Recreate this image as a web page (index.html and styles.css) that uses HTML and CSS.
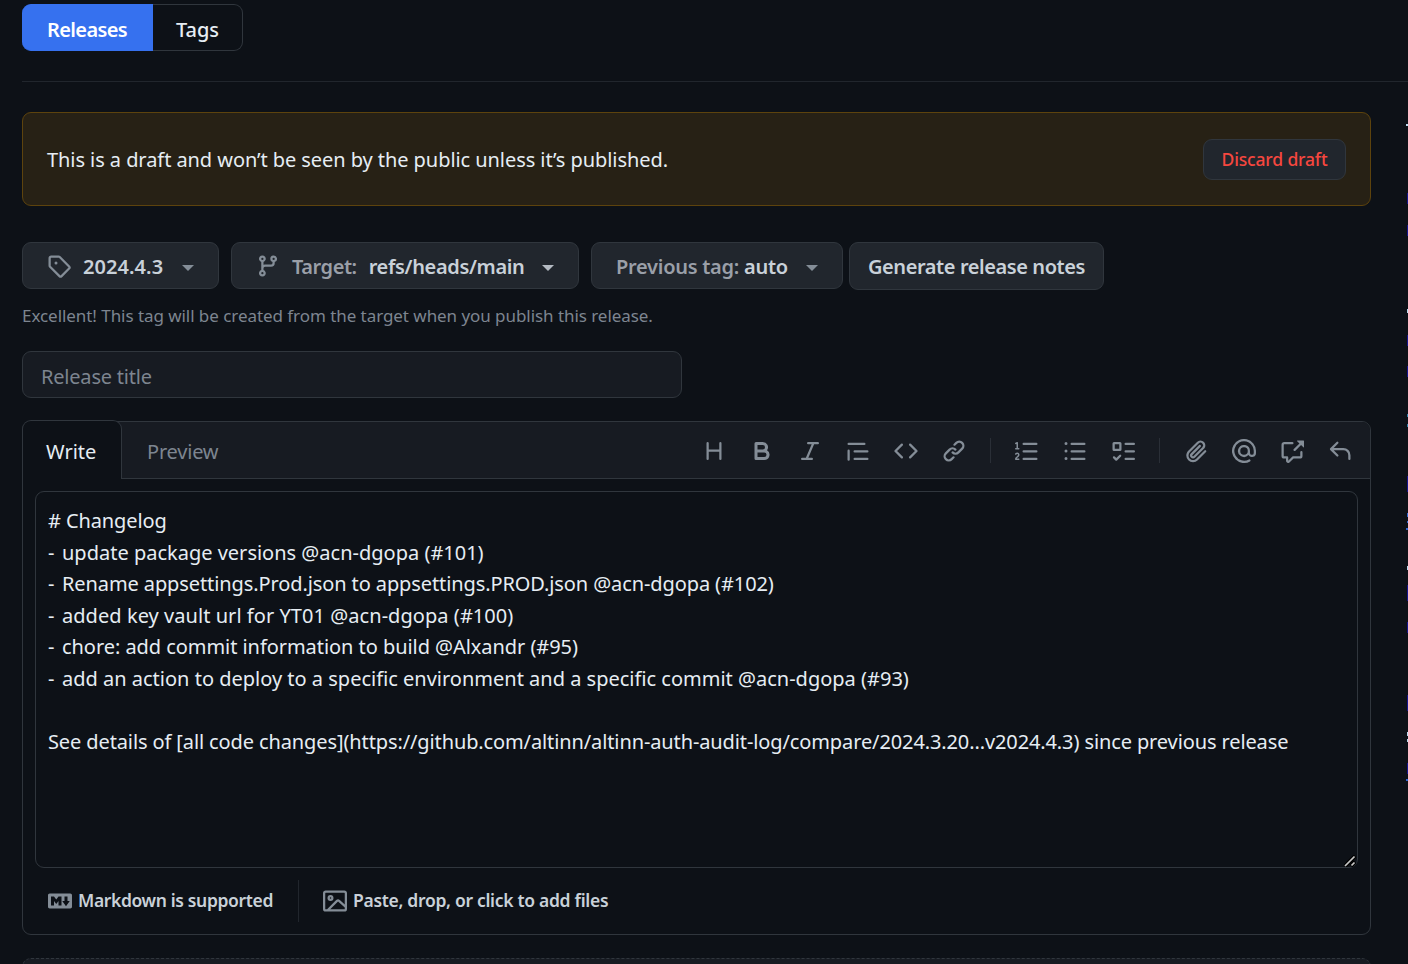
FILE: index.html
```html
<!DOCTYPE html>
<html lang="en">
<head>
<meta charset="utf-8">
<title>Edit release</title>
<link rel="stylesheet" href="styles.css">
</head>
<body>
<div class="page">
<main class="main">
  <nav class="subnav">
    <a class="subnav-item selected"><span class="t-releases">Releases</span></a>
    <a class="subnav-item"><span class="t-tags">Tags</span></a>
  </nav>
  <section class="flash">
    <span class="t-flash">This is a draft and won’t be seen by the public unless it’s published.</span>
    <button class="btn btn-danger"><span class="t-discard">Discard draft</span></button>
  </section>
  <div class="pickers">
    <button class="btn b-tag">
      <svg class="icon" viewBox="0 0 16 16"><path d="M1 7.775V2.75C1 1.784 1.784 1 2.75 1h5.025c.464 0 .91.184 1.238.513l6.25 6.25a1.75 1.75 0 0 1 0 2.474l-5.026 5.026a1.75 1.75 0 0 1-2.474 0l-6.25-6.25A1.752 1.752 0 0 1 1 7.775Zm1.5 0c0 .066.026.13.073.177l6.25 6.25a.25.25 0 0 0 .354 0l5.025-5.025a.25.25 0 0 0 0-.354l-6.25-6.25a.25.25 0 0 0-.177-.073H2.75a.25.25 0 0 0-.25.25ZM6 5a1 1 0 1 1 0 2 1 1 0 0 1 0-2Z"/></svg>
      <span class="value t-version">2024.4.3</span><i class="caret"></i>
    </button>
    <button class="btn b-target">
      <svg class="icon" viewBox="0 0 16 16"><path d="M9.5 3.25a2.25 2.25 0 1 1 3 2.122V6A2.5 2.5 0 0 1 10 8.5H6a1 1 0 0 0-1 1v1.128a2.251 2.251 0 1 1-1.5 0V5.372a2.25 2.25 0 1 1 1.5 0v1.836A2.493 2.493 0 0 1 6 7h4a1 1 0 0 0 1-1v-.628A2.25 2.25 0 0 1 9.5 3.25Zm-6 0a.75.75 0 1 0 1.5 0 .75.75 0 0 0-1.5 0Zm8.25-.75a.75.75 0 1 0 0 1.5.75.75 0 0 0 0-1.5ZM4.25 12a.75.75 0 1 0 0 1.5.75.75 0 0 0 0-1.5Z"/></svg>
      <span class="label t-target">Target:</span><span class="value t-ref">refs/heads/main</span><i class="caret light"></i>
    </button>
    <button class="btn b-prev"><span class="label t-prev">Previous tag:</span><span class="value t-auto">auto</span><i class="caret"></i></button>
    <button class="btn b-generate"><span class="t-generate">Generate release notes</span></button>
  </div>
  <p class="note"><span class="t-note">Excellent! This tag will be created from the target when you publish this release.</span></p>
  <div class="title-input"><span class="t-title">Release title</span></div>
  <section class="editor">
    <header class="editor-head">
      <div class="tab active"><span class="t-write">Write</span></div>
      <div class="tab"><span class="t-preview">Preview</span></div>
      <div class="toolbar">
        <svg class="icon" viewBox="0 0 16 16"><path d="M3.75 2a.75.75 0 0 1 .75.75V7h7V2.75a.75.75 0 0 1 1.5 0v10.5a.75.75 0 0 1-1.5 0V8.5h-7v4.75a.75.75 0 0 1-1.5 0V2.75A.75.75 0 0 1 3.75 2Z"/></svg>
        <svg class="icon" viewBox="0 0 16 16"><path d="M4 2h4.5a3.501 3.501 0 0 1 2.852 5.53A3.499 3.499 0 0 1 9.5 14H4a1 1 0 0 1-1-1V3a1 1 0 0 1 1-1Zm1 7v3h4.5a1.5 1.5 0 0 0 0-3Zm3.5-2a1.5 1.5 0 0 0 0-3H5v3Z"/></svg>
        <svg class="icon" viewBox="0 0 16 16"><path d="M6 2.75A.75.75 0 0 1 6.75 2h6.5a.75.75 0 0 1 0 1.5h-2.505l-3.858 9H9.25a.75.75 0 0 1 0 1.5h-6.5a.75.75 0 0 1 0-1.5h2.505l3.858-9H6.75A.75.75 0 0 1 6 2.75Z"/></svg>
        <svg class="icon" viewBox="0 0 16 16"><path d="M1.75 2.5h10.5a.75.75 0 0 1 0 1.5H1.75a.75.75 0 0 1 0-1.5Zm4 5h8.5a.75.75 0 0 1 0 1.5h-8.5a.75.75 0 0 1 0-1.5Zm0 5h8.5a.75.75 0 0 1 0 1.5h-8.5a.75.75 0 0 1 0-1.5ZM2.5 7.75v6a.75.75 0 0 1-1.5 0v-6a.75.75 0 0 1 1.5 0Z"/></svg>
        <svg class="icon" viewBox="0 0 16 16"><path d="m11.28 3.22 4.25 4.25a.75.75 0 0 1 0 1.06l-4.25 4.25a.749.749 0 0 1-1.275-.326.749.749 0 0 1 .215-.734L13.94 8l-3.72-3.72a.749.749 0 0 1 .326-1.275.749.749 0 0 1 .734.215Zm-6.56 0a.751.751 0 0 1 1.042.018.751.751 0 0 1 .018 1.042L2.06 8l3.72 3.72a.749.749 0 0 1-.326 1.275.749.749 0 0 1-.734-.215L.47 8.53a.75.75 0 0 1 0-1.06Z"/></svg>
        <svg class="icon" viewBox="0 0 16 16"><path d="m7.775 3.275 1.25-1.25a3.5 3.5 0 1 1 4.95 4.95l-2.5 2.5a3.5 3.5 0 0 1-4.95 0 .751.751 0 0 1 .018-1.042.751.751 0 0 1 1.042-.018 1.998 1.998 0 0 0 2.83 0l2.5-2.5a2.002 2.002 0 0 0-2.83-2.83l-1.25 1.25a.751.751 0 0 1-1.042-.018.751.751 0 0 1-.018-1.042Zm-4.69 9.64a1.998 1.998 0 0 0 2.83 0l1.25-1.25a.751.751 0 0 1 1.042.018.751.751 0 0 1 .018 1.042l-1.25 1.25a3.5 3.5 0 1 1-4.95-4.95l2.5-2.5a3.5 3.5 0 0 1 4.95 0 .751.751 0 0 1-.018 1.042.751.751 0 0 1-1.042.018 1.998 1.998 0 0 0-2.83 0l-2.5 2.5a1.998 1.998 0 0 0 0 2.83Z"/></svg>
        <i class="divider"></i>
        <svg class="icon" viewBox="0 0 16 16"><path d="M5 3.25a.75.75 0 0 1 .75-.75h8.5a.75.75 0 0 1 0 1.5h-8.5A.75.75 0 0 1 5 3.25Zm0 5a.75.75 0 0 1 .75-.75h8.5a.75.75 0 0 1 0 1.5h-8.5A.75.75 0 0 1 5 8.25Zm0 5a.75.75 0 0 1 .75-.75h8.5a.75.75 0 0 1 0 1.5h-8.5a.75.75 0 0 1-.75-.75ZM.924 10.32a.5.5 0 0 1-.851-.525l.001-.001.001-.002.002-.004.007-.011c.097-.144.215-.273.348-.384.228-.19.588-.392 1.068-.392.468 0 .858.181 1.126.484.259.294.377.673.377 1.038 0 .987-.686 1.495-1.156 1.845l-.047.035c-.303.225-.522.4-.654.597h1.357a.5.5 0 0 1 0 1H.5a.5.5 0 0 1-.5-.5c0-1.005.692-1.52 1.167-1.875l.035-.025c.531-.396.8-.625.8-1.078a.57.57 0 0 0-.128-.376C1.806 10.068 1.695 10 1.5 10a.658.658 0 0 0-.429.163.835.835 0 0 0-.144.153ZM2.003 2.5V6h.503a.5.5 0 0 1 0 1H.5a.5.5 0 0 1 0-1h.503V3.308l-.28.14a.5.5 0 0 1-.446-.895l1.003-.5a.5.5 0 0 1 .723.447Z"/></svg>
        <svg class="icon" viewBox="0 0 16 16"><path d="M5.75 2.5h8.5a.75.75 0 0 1 0 1.5h-8.5a.75.75 0 0 1 0-1.5Zm0 5h8.5a.75.75 0 0 1 0 1.5h-8.5a.75.75 0 0 1 0-1.5Zm0 5h8.5a.75.75 0 0 1 0 1.5h-8.5a.75.75 0 0 1 0-1.5ZM2 14a1 1 0 1 1 0-2 1 1 0 0 1 0 2Zm1-6a1 1 0 1 1-2 0 1 1 0 0 1 2 0ZM2 4a1 1 0 1 1 0-2 1 1 0 0 1 0 2Z"/></svg>
        <svg class="icon" viewBox="0 0 16 16"><path d="M2 2h4a1 1 0 0 1 1 1v4a1 1 0 0 1-1 1H2a1 1 0 0 1-1-1V3a1 1 0 0 1 1-1Zm4.655 8.595a.75.75 0 0 1 0 1.06L4.03 14.28a.75.75 0 0 1-1.06 0l-1.5-1.5a.749.749 0 0 1 .326-1.275.749.749 0 0 1 .734.215l.97.97 2.095-2.095a.75.75 0 0 1 1.06 0ZM9.75 2.5h5.5a.75.75 0 0 1 0 1.5h-5.5a.75.75 0 0 1 0-1.5Zm0 5h5.5a.75.75 0 0 1 0 1.5h-5.5a.75.75 0 0 1 0-1.5Zm0 5h5.5a.75.75 0 0 1 0 1.5h-5.5a.75.75 0 0 1 0-1.5Zm-7.25-9v3h3v-3Z"/></svg>
        <i class="divider"></i>
        <svg class="icon" viewBox="0 0 16 16"><path d="M12.212 3.02a1.753 1.753 0 0 0-2.478.003l-5.83 5.83a3.007 3.007 0 0 0-.88 2.127c0 .795.315 1.551.88 2.116.567.567 1.333.89 2.126.89.79 0 1.548-.321 2.116-.89l5.48-5.48a.75.75 0 0 1 1.061 1.06l-5.48 5.48a4.492 4.492 0 0 1-3.177 1.33c-1.2 0-2.345-.487-3.187-1.33a4.483 4.483 0 0 1-1.32-3.177c0-1.195.475-2.341 1.32-3.186l5.83-5.83a3.25 3.25 0 0 1 5.553 2.297c0 .863-.343 1.691-.953 2.301L7.439 12.39c-.375.377-.884.59-1.416.593a1.998 1.998 0 0 1-1.412-.593 1.992 1.992 0 0 1 0-2.828l5.48-5.48a.751.751 0 0 1 1.042.018.751.751 0 0 1 .018 1.042l-5.48 5.48a.492.492 0 0 0 0 .707.499.499 0 0 0 .352.154.51.51 0 0 0 .356-.154l5.833-5.827a1.755 1.755 0 0 0 0-2.481Z"/></svg>
        <svg class="icon" viewBox="0 0 16 16"><path d="M4.75 2.37a6.501 6.501 0 0 0 6.5 11.26.75.75 0 0 1 .75 1.298A7.999 7.999 0 0 1 .989 4.148 8 8 0 0 1 16 7.75v1.5a2.75 2.75 0 0 1-5.072 1.475 3.999 3.999 0 0 1-6.65-4.19A4 4 0 0 1 12 8v1.25a1.25 1.25 0 0 0 2.5 0V7.867a6.5 6.5 0 0 0-9.75-5.496ZM10.5 8a2.5 2.5 0 1 0-5 0 2.5 2.5 0 0 0 5 0Z"/></svg>
        <svg class="icon" viewBox="0 0 16 16"><path d="M2.75 3.5a.25.25 0 0 0-.25.25v7.5c0 .138.112.25.25.25h2a.75.75 0 0 1 .75.75v2.19l2.72-2.72a.749.749 0 0 1 .53-.22h4.5a.25.25 0 0 0 .25-.25v-2.5a.75.75 0 0 1 1.5 0v2.5A1.75 1.75 0 0 1 13.25 13H9.06l-2.573 2.573A1.458 1.458 0 0 1 4 14.543V13H2.75A1.75 1.75 0 0 1 1 11.25v-7.5C1 2.784 1.784 2 2.75 2h5.5a.75.75 0 0 1 0 1.5ZM16 1.25v4.146a.25.25 0 0 1-.427.177L14.03 4.03l-3.75 3.75a.749.749 0 0 1-1.275-.326.749.749 0 0 1 .215-.734l3.75-3.75-1.543-1.543A.25.25 0 0 1 11.604 1h4.146a.25.25 0 0 1 .25.25Z"/></svg>
        <svg class="icon" viewBox="0 0 16 16"><path d="M6.78 1.97a.75.75 0 0 1 0 1.06L3.81 6h6.44A4.75 4.75 0 0 1 15 10.75v2.5a.75.75 0 0 1-1.5 0v-2.5a3.25 3.25 0 0 0-3.25-3.25H3.81l2.97 2.97a.749.749 0 0 1-.326 1.275.749.749 0 0 1-.734-.215L1.47 7.28a.75.75 0 0 1 0-1.06l4.25-4.25a.75.75 0 0 1 1.06 0Z"/></svg>
      </div>
    </header>
    <div class="textarea">
      <div><span class="l1"># Changelog</span></div>
      <div><span class="dash">- </span><span class="l2">update package versions @acn-dgopa (#101)</span></div>
      <div><span class="dash">- </span><span class="l3">Rename appsettings.Prod.json to appsettings.PROD.json @acn-dgopa (#102)</span></div>
      <div><span class="dash">- </span><span class="l4">added key vault url for YT01 @acn-dgopa (#100)</span></div>
      <div><span class="dash">- </span><span class="l5">chore: add commit information to build @Alxandr (#95)</span></div>
      <div><span class="dash">- </span><span class="l6">add an action to deploy to a specific environment and a specific commit @acn-dgopa (#93)</span></div>
      <div>&nbsp;</div>
      <div><span class="l8">See details of [all code changes](https://github.com/altinn/altinn-auth-audit-log/compare/2024.3.20...v2024.4.3) since previous release</span></div>
      <svg class="grip" viewBox="0 0 12 12"><path d="M1 11 11 1M7 11l4-4" stroke="#000" stroke-width="4"/><path d="M1 11 10.500 1.500M7.500 10.500l3-3" stroke="#c8c8c8" stroke-width="1.700"/></svg>
    </div>
    <footer class="editor-foot">
      <span class="foot-item md"><svg class="icon" viewBox="0 0 16 16"><path d="M14.85 3c.63 0 1.15.52 1.14 1.15v7.7c0 .63-.51 1.15-1.15 1.15H1.15C.52 13 0 12.48 0 11.84V4.15C0 3.52.52 3 1.15 3ZM9 11V5H7L5.500 7 4 5H2v6h2V8l1.500 1.920L7 8v3Zm2.990.500L14.500 8H13V5h-2v3H9.500Z"/></svg><span class="t-md">Markdown is supported</span></span>
      <i class="foot-line"></i>
      <span class="foot-item"><svg class="icon" viewBox="0 0 16 16"><path d="M16 13.250A1.750 1.750 0 0 1 14.250 15H1.750A1.750 1.750 0 0 1 0 13.250V2.750C0 1.784.784 1 1.750 1h12.500c.966 0 1.750.784 1.750 1.750ZM1.750 2.500a.25.25 0 0 0-.25.25v10.500c0 .138.112.25.25.25h.94l.03-.03 6.077-6.078a1.750 1.750 0 0 1 2.412-.06L14.500 10.310V2.750a.25.25 0 0 0-.25-.25Zm12.500 11a.25.25 0 0 0 .25-.25v-.917l-4.298-3.889a.25.25 0 0 0-.344.009L4.810 13.500ZM7 6a2 2 0 1 1-3.999.001A2 2 0 0 1 7 6ZM5.500 6a.5.5 0 1 0-1 0 .5.5 0 0 0 1 0Z"/></svg><span class="t-paste">Paste, drop, or click to add files</span></span>
    </footer>
  </section>
  <div class="dropzone"></div>
</main>
<svg class="side-edge" viewBox="0 0 2 964" shape-rendering="crispEdges">
  <path fill="#b9d9ee" d="M0 124h2v2H0zM1 309h1v4H1zM1 566h1v4H1zM1 732h1v4H1zM1 739h1v3H1z"/>
  <path fill="#2b7fa8" d="M1 414h1v3H1zM1 424h1v3H1z"/>
  <path fill="#2f66d0" d="M1 513h1v4H1zM1 521h1v2H1zM0 528h2v2H0zM0 779h2v2H0z"/>
  <path fill="#14148c" d="M1 193h1v11H1zM1 225h1v11H1zM1 335h1v11H1zM1 366h1v11H1zM1 476h1v16H1zM1 585h1v16H1zM1 622h1v11H1zM1 695h1v16H1zM1 763h1v11H1z"/>
</svg>
</div>
</body>
</html>
```
FILE: styles.css
```css
* { box-sizing: border-box; }
body { margin: 0; background: #0d1117; color: #e6edf3; font: 20px/31.5px "Noto Sans", "Open Sans", sans-serif; }
.page { position: relative; width: 1408px; height: 964px; overflow: hidden; }
.main { padding: 4px 37px 0 22px; }
.main span { white-space: nowrap; }
.subnav { display: flex; height: 78px; margin-right: -37px; border-bottom: 1px solid #21262d; }
.subnav-item { display: flex; align-items: center; justify-content: center; height: 47px; padding-top: 5px; width: 90px; border: 1px solid #30363d; border-left: 0; border-radius: 0 9px 9px 0; font-weight: 500; }
.subnav-item.selected { width: 131px; background: #3671ef; border-color: #3671ef; border-radius: 9px 0 0 9px; color: #fff; font-weight: 600; }
.flash { display: flex; align-items: center; justify-content: space-between; height: 94px; margin-top: 30px; padding: 0 24px; border: 1px solid #5d430d; border-radius: 9px; background: #272115; }
.t-flash { padding-top: 2px; }
.btn { display: flex; align-items: center; height: 47px; padding: 0 24px; border: 1px solid #30363d; border-radius: 9px; background: #21262d; color: #c9d1d9; font: 600 20px/30px "Noto Sans", "Open Sans", sans-serif; }
.btn-danger { justify-content: center; width: 143px; height: 41px; padding: 0; color: #f6473f; font-size: 17.5px; font-weight: 500; }
.pickers { display: flex; margin-top: 36px; }
.pickers .btn { line-height: 30px; }
.pickers span { padding-top: 2px; }
.pickers .icon { margin-top: 1px; }
.icon { width: 24px; height: 24px; flex: none; fill: #848d97; }
.label { color: #9a9fa8; }
.b-tag { width: 197px; margin-right: 12px; }
.b-tag .value { margin-left: 12px; }
.b-target { width: 348px; margin-right: 12px; }
.b-target .label { margin-left: 12px; }
.b-target .value { margin-left: 12px; }
.b-prev { width: 252px; margin-right: 6px; }
.b-prev .value { margin-left: 5px; }
.b-generate { width: 255px; height: 48px; justify-content: center; padding: 0; }
.caret { margin-left: auto; border: 6px solid transparent; border-top-color: #848d97; border-bottom: 0; position: relative; top: 2px; }
.caret.light { border-top-color: #b4bac2; }
.note { margin: 11px 0 0; height: 27px; font-size: 17px; line-height: 30px; color: #7d8590; }
.title-input { height: 47px; width: 660px; margin-top: 23px; padding: 2px 18px 0; border: 1px solid #30363d; border-radius: 9px; background: #171b22; color: #7d8590; line-height: 45px; }
.editor { height: 514px; margin-top: 23px; border: 1px solid #30363d; border-radius: 9px; }
.editor-head { display: flex; height: 57px; border-radius: 8px 8px 0 0; background: #171b22; box-shadow: inset 0 -1px #30363d; }
.tab { padding: 0 24px 0 25px; line-height: 60px; color: #7d8590; }
.tab.active { width: 100px; height: 59px; margin: -2px 0 0 -1px; padding: 1px 0 0 23px; border: 1px solid #30363d; border-bottom: 0; border-radius: 9px 9px 0 0; background: #0d1117; color: #e6edf3; }
.toolbar { display: flex; align-items: center; gap: 24px; margin-left: auto; padding-right: 18px; }
.divider { width: 1px; height: 25px; background: #2a2f37; }
.textarea { position: relative; height: 377px; margin: 12px 12px 0; padding: 13px 12px; border: 1px solid #30363d; border-radius: 9px; white-space: nowrap; }
.dash { display: inline-block; width: 14px; }
.grip { position: absolute; right: 1px; bottom: 0; width: 12px; height: 12px; fill: none; }
.editor-foot { display: flex; align-items: center; height: 42px; margin-top: 12px; padding-left: 25px; color: #c9d1d9; font-size: 17.5px; font-weight: 600; }
.foot-item { display: flex; align-items: center; gap: 6px; }
.md { width: 250px; }
.foot-line { width: 1px; height: 42px; margin-right: 24px; background: #21262d; }
.dropzone { height: 30px; margin-top: 23px; border: 1px dashed #30363d; border-radius: 9px; background: #171b22; }
.side-edge { position: absolute; right: 0; top: 0; width: 2px; height: 964px; }

/* Tracking per text run */
.t-releases { letter-spacing: -0.6px; }
.t-flash { letter-spacing: -0.065px; }
.t-discard { letter-spacing: -0.15px; }
.t-version { letter-spacing: 0.06px; }
.t-target { letter-spacing: -0.45px; }
.t-ref { letter-spacing: -0.35px; }
.t-prev { letter-spacing: -0.27px; }
.t-auto { letter-spacing: -0.25px; }
.t-generate { letter-spacing: -0.42px; }
.t-note { letter-spacing: -0.055px; }
.t-title { letter-spacing: -0.2px; }
.t-preview { letter-spacing: -0.2px; }
.t-md { letter-spacing: -0.36px; }
.t-paste { letter-spacing: -0.3px; }
.l1 { letter-spacing: -0.1px; }
.l3 { letter-spacing: -0.1px; }
.l4 { letter-spacing: 0.05px; }
.l5 { letter-spacing: -0.055px; }
.l8 { letter-spacing: -0.113px; }
```
